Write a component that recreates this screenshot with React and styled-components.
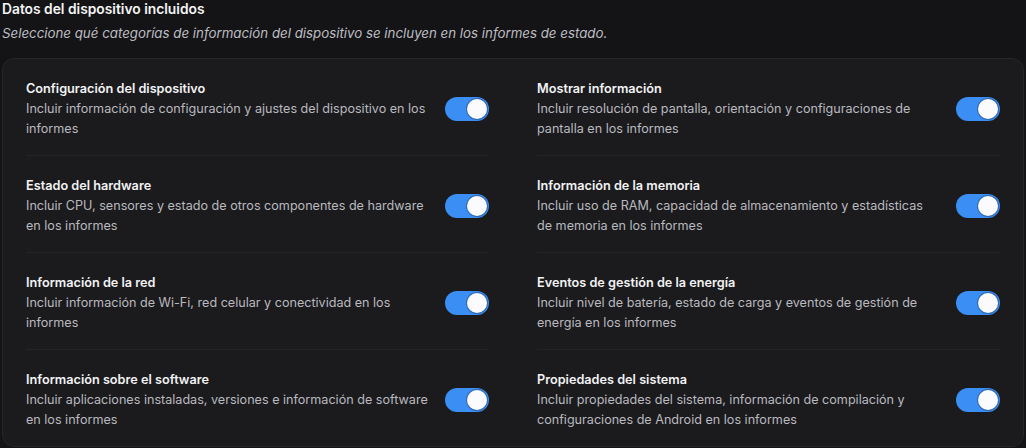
import React, { useState } from 'react';
import styled, { createGlobalStyle } from 'styled-components';

const GlobalStyle = createGlobalStyle`
  html, body {
    margin: 0;
    padding: 0;
    background: #141416;
  }
  body {
    font-family: Inter, "Noto Sans", sans-serif;
    -webkit-font-smoothing: antialiased;
  }
`;

const left = [
  {
    title: 'Configuración del dispositivo',
    text: 'Incluir información de configuración y ajustes del dispositivo en los informes',
  },
  {
    title: 'Estado del hardware',
    text: 'Incluir CPU, sensores y estado de otros componentes de hardware en los informes',
  },
  {
    title: 'Información de la red',
    text: 'Incluir información de Wi-Fi, red celular y conectividad en los informes',
  },
  {
    title: 'Información sobre el software',
    text: 'Incluir aplicaciones instaladas, versiones e información de software en los informes',
  },
];

const right = [
  {
    title: 'Mostrar información',
    text: 'Incluir resolución de pantalla, orientación y configuraciones de pantalla en los informes',
  },
  {
    title: 'Información de la memoria',
    text: 'Incluir uso de RAM, capacidad de almacenamiento y estadísticas de memoria en los informes',
  },
  {
    title: 'Eventos de gestión de la energía',
    text: 'Incluir nivel de batería, estado de carga y eventos de gestión de energía en los informes',
  },
  {
    title: 'Propiedades del sistema',
    text: 'Incluir propiedades del sistema, información de compilación y configuraciones de Android en los informes',
  },
];

function Toggle({ on, onClick }) {
  return (
    <Switch type="button" on={on ? 1 : 0} onClick={onClick}>
      <Thumb on={on ? 1 : 0} />
    </Switch>
  );
}

function Column({ items }) {
  const [state, setState] = useState(items.map(() => true));
  return (
    <Col>
      {items.map((it, i) => (
        <Row key={it.title}>
          <RowText>
            <RowTitle>{it.title}</RowTitle>
            <RowDesc>{it.text}</RowDesc>
          </RowText>
          <Toggle
            on={state[i]}
            onClick={() => setState(s => s.map((v, j) => (j === i ? !v : v)))}
          />
        </Row>
      ))}
    </Col>
  );
}

export default function App() {
  return (
    <Page>
      <GlobalStyle />
      <Heading>Datos del dispositivo incluidos</Heading>
      <Subtitle>
        Seleccione qué categorías de información del dispositivo se incluyen en los informes de estado.
      </Subtitle>
      <Card>
        <Column items={left} />
        <Column items={right} />
      </Card>
    </Page>
  );
}

const Page = styled.div`
  padding: 0 2px;
  color: #f2f2f3;
`;

const Heading = styled.h2`
  margin: 0;
  font-size: 13.8px;
  line-height: 18px;
  font-weight: 600;
  color: #f4f4f5;
`;

const Subtitle = styled.p`
  margin: 6px 0 0;
  font-size: 13.3px;
  line-height: 18px;
  font-style: italic;
  color: #bdbdc2;
`;

const Card = styled.div`
  margin-top: 16px;
  background: #1b1b1e;
  border: 1px solid #26262a;
  border-radius: 12px;
  padding: 0 23px;
  display: grid;
  grid-template-columns: 1fr 1fr;
  column-gap: 48px;
`;

const Col = styled.div`
  display: flex;
  flex-direction: column;
`;

const Row = styled.div`
  display: flex;
  align-items: center;
  gap: 16px;
  padding: 20px 0 16px;
  border-bottom: 1px solid #242428;
  &:last-child {
    border-bottom: none;
  }
`;

const RowText = styled.div`
  flex: 1;
  min-width: 0;
`;

const RowTitle = styled.div`
  font-size: 12.7px;
  line-height: 20px;
  font-weight: 600;
  color: #f2f2f3;
`;

const RowDesc = styled.div`
  font-size: 12.6px;
  line-height: 20px;
  color: #b9b9be;
`;

const Switch = styled.button`
  flex: none;
  width: 44px;
  height: 24px;
  border-radius: 12px;
  border: none;
  padding: 2px;
  cursor: pointer;
  background: ${p => (p.on ? '#3a8ef4' : '#3a3a40')};
  display: flex;
  justify-content: ${p => (p.on ? 'flex-end' : 'flex-start')};
  align-items: center;
`;

const Thumb = styled.span`
  width: 20px;
  height: 20px;
  border-radius: 50%;
  background: #fbfbfd;
  box-shadow: 0 0 0 1px rgba(30, 40, 60, 0.35);
`;
